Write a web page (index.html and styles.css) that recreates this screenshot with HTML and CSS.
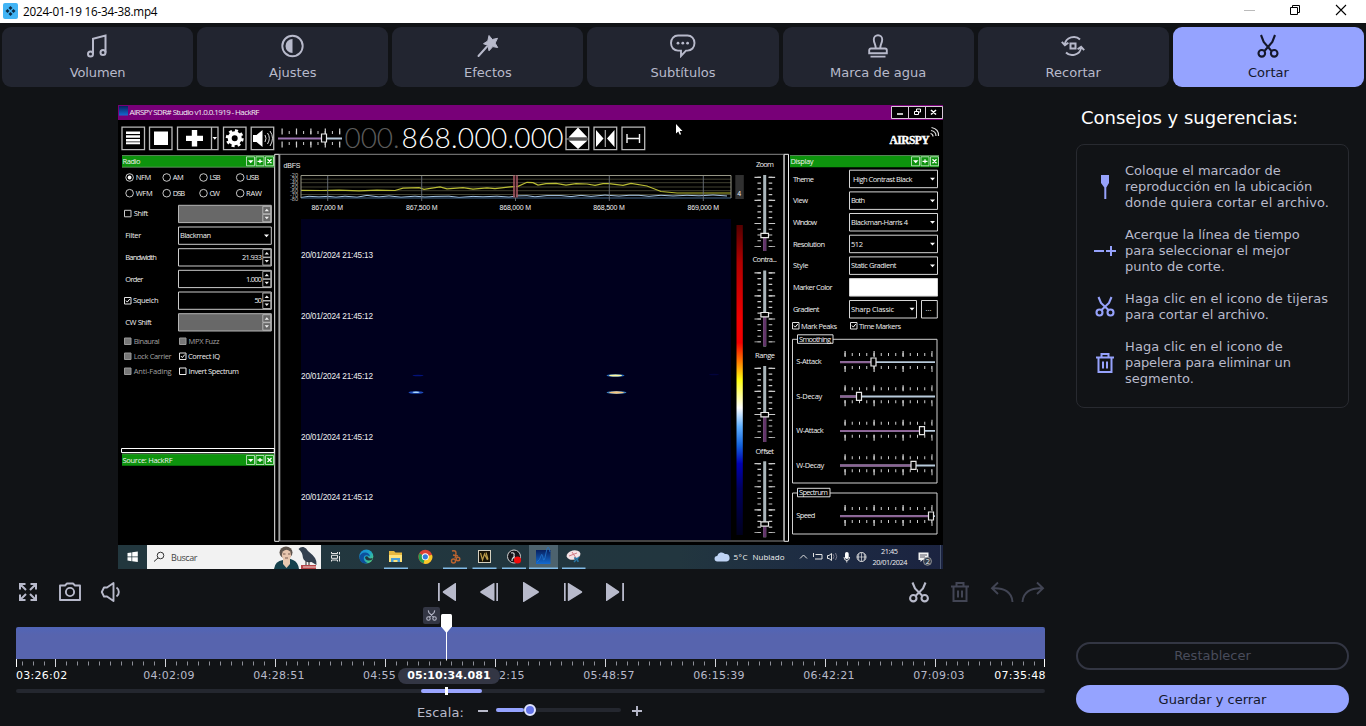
FILE: index.html
```html
<!DOCTYPE html>
<html lang="es">
<head>
<meta charset="utf-8">
<title>2024-01-19 16-34-38.mp4</title>
<link rel="stylesheet" href="styles.css">
</head>
<body>
<svg class="defs" width="0" height="0">
  <defs>
    <symbol id="i-cut" viewBox="0 0 24 24"><g fill="none" stroke="currentColor" stroke-width="2"><circle cx="6.4" cy="17.6" r="3.2"/><circle cx="17.6" cy="17.6" r="3.2"/><path d="M6 2.5l1.2 4L15.8 15M18 2.5l-1.2 4L8.2 15" stroke-linejoin="round"/></g></symbol>
    <symbol id="i-trash" viewBox="0 0 24 24"><g fill="none" stroke="currentColor" stroke-width="2"><path d="M3 6.5h18M8.500 6V3h7v3M5.500 7v14h13V7M10 10.500v7M14 10.500v7"/></g></symbol>
  </defs>
</svg>

<header class="titlebar">
  <svg class="app-icon" width="15" height="16" viewBox="0 0 15 16"><rect width="15" height="16" rx="2" fill="#42b4f5"/><g fill="#0b2b45"><path d="M7.5 3l2 2-2 2-2-2zM7.5 9l2 2-2 2-2-2zM4.5 6l2 2-2 2-2-2zM10.500 6l2 2-2 2-2-2z"/></g></svg>
  <span class="file-name">2024-01-19 16-34-38.mp4</span>
  <svg class="window-buttons" width="104" height="14" viewBox="0 0 104 14" fill="none" stroke="#000"><path d="M1 7.500h11" stroke="#bbb"/><path d="M47.500 4.500h7v7h-7zM49.500 4.500v-2h7v7h-2"/><path d="M93 2l10 10M103 2l-10 10" stroke-width="1.100"/></svg>
</header>

<nav class="tabs">
  <div class="tab"><svg viewBox="0 0 24 24" fill="none" stroke="currentColor" stroke-width="2"><circle cx="4.500" cy="20" r="2.500"/><circle cx="17" cy="18.500" r="2.500"/><path d="M7 20V4.800L19.500 1.500v17"/></svg><span class="snug">Volumen</span></div>
  <div class="tab"><svg viewBox="0 0 24 24"><circle cx="11.500" cy="12" r="10.200" fill="none" stroke="currentColor" stroke-width="1.900"/><path d="M11.500 5v14a7 7 0 010-14z" fill="currentColor"/></svg><span>Ajustes</span></div>
  <div class="tab"><svg viewBox="0 0 24 24"><path d="M13 1.500l3.300 4 5.200-1.200-2.400 4.800 2.600 4.400-4.900-.9-3.800 4.200-1-5.400-4.500-1.700 4.300-2.700z" fill="currentColor" stroke="currentColor" stroke-linejoin="round"/><path d="M2.500 22L11 12.500" stroke="currentColor" stroke-width="2" stroke-linecap="round"/></svg><span>Efectos</span></div>
  <div class="tab"><svg class="wide" viewBox="0 0 28 24"><path d="M9 1.500h9.500c4 0 7 3 7 7.500s-3 7.600-7 7.600H17L12 22v-5.400H9c-4 0-7-3.100-7-7.600s3-7.500 7-7.500z" fill="none" stroke="currentColor" stroke-width="1.900"/><g fill="currentColor"><circle cx="9" cy="9.200" r="1.400"/><circle cx="13.800" cy="9.200" r="1.400"/><circle cx="18.600" cy="9.200" r="1.400"/></g></svg><span>Subtítulos</span></div>
  <div class="tab"><svg viewBox="0 0 24 24" fill="none" stroke="currentColor" stroke-width="1.900"><path d="M9.800 14.500c0-4-2-5.500-2-9a4.200 4.200 0 018.400 0c0 3.500-2 5-2 9M5 14.500h14a1.800 1.800 0 011.800 1.800v2.900H3.200v-2.900A1.800 1.800 0 015 14.500zM4.500 22.600h15"/></svg><span>Marca de agua</span></div>
  <div class="tab"><svg viewBox="0 0 24 24" fill="none" stroke="currentColor" stroke-width="1.900"><path d="M19 5.500C14.500.8 4.500 3 4 10.500M.8 7.800l3.100 3.400 3.500-2.500M5 18.500c4.500 4.700 14.500 2.500 15-5M23.200 16.200l-3.100-3.400-3.500 2.500"/><path d="M9.500 9.500h5v5h-5z" stroke-width="2"/></svg><span>Recortar</span></div>
  <div class="tab active"><svg class="cut" viewBox="0 0 24 24" fill="none" stroke="currentColor" stroke-width="2.100"><circle cx="5.800" cy="19.300" r="3.300"/><circle cx="18.200" cy="19.300" r="3.300"/><path d="M5 1l2.700 7 7.800 9M19 1l-2.700 7-7.800 9"/></svg><span>Cortar</span></div>
</nav>

<main class="workspace">
  <section class="editor">
    <svg class="preview" viewBox="118 105 825 464" width="825" height="464">
      <defs>
        <linearGradient id="heat" x1="0" y1="0" x2="0" y2="1"><stop offset="0" stop-color="#500"/><stop offset=".12" stop-color="#b00000"/><stop offset=".3" stop-color="#e00"/><stop offset=".38" stop-color="#f20000"/><stop offset=".44" stop-color="#ff7a00"/><stop offset=".5" stop-color="#ffff10"/><stop offset=".59" stop-color="#fff"/><stop offset=".65" stop-color="#60b0ff"/><stop offset=".71" stop-color="#1464dc"/><stop offset=".77" stop-color="#0000b0"/><stop offset=".85" stop-color="#00005c"/><stop offset="1" stop-color="#00001c"/></linearGradient>
        <linearGradient id="task"><stop offset="0" stop-color="#22373e"/><stop offset=".68" stop-color="#22363f"/><stop offset=".85" stop-color="#1d2b43"/><stop offset="1" stop-color="#1b2340"/></linearGradient>
        <linearGradient id="edge" x1="0" y1="0" x2="1" y2="1"><stop offset="0" stop-color="#1684d8"/><stop offset=".5" stop-color="#1ca5c8"/><stop offset="1" stop-color="#63d764"/></linearGradient>
        <linearGradient id="wave" x1="0" y1="0" x2="0" y2="1"><stop offset="0" stop-color="#07205f"/><stop offset="1" stop-color="#146bd0"/></linearGradient>
        <clipPath id="plot"><path d="M301 175h430v24H301z"/></clipPath>
        <g id="head-buttons" fill="none" stroke="#d4ecd4"><path d="M.5.5h8v9h-8zM10 .5h8v9h-8zM19.500.5h8v9h-8z" stroke-width=".8"/><path d="M2 4h5.500L4.700 7z" fill="#fff" stroke="none"/><path d="M11.500 5h5M14 3v4M21.500 3l4 4M25.500 3l-4 4" stroke="#fff" stroke-width="1.300"/></g>
        <g id="arrow"><path d="M-2.500-1.200h5L0 1.500z" fill="#fff"/></g>
        <g id="spin"><path d="M0 0h8v7.500H0zM0 8h8v7.500H0z" fill="none" stroke="#bbb" stroke-width=".9"/><path d="M1.800 5h4.400L4 2.500zM1.800 10.500h4.400L4 13z" fill="#eee"/></g>
        <g id="ticks" stroke="#d0d0d0"><path d="M4.500-7.500h87.500" stroke-width="3" stroke-dasharray="1 6.250"/><path d="M4.500 5.500h87.500" stroke-width="3" stroke-dasharray="1 6.250"/><path d="M4.500-8h88" stroke-width="6" stroke-dasharray="1.200 27.800"/><path d="M4.500 7h88" stroke-width="6" stroke-dasharray="1.200 27.800"/><path d="M0 .2h95" stroke="#b7c9da" stroke-width="1.800"/></g>
        <g id="vticks" stroke="#c9c9c9"><path d="M-5.500 1.800v70" stroke-width="3.500" stroke-dasharray="1.200 4.560"/><path d="M5.800 1.800v70" stroke-width="3.500" stroke-dasharray="1.200 4.560"/><path d="M-7 1.800v70M7.200 1.800v70" stroke-width="6.500" stroke-dasharray="1.200 21.850"/><path d="M0 0v76" stroke="#a9b5ba" stroke-width="3"/></g>
        <g id="thumb"><path d="M-2.500-4h5v8h-5z" fill="#000" stroke="#e6e6e6" stroke-width="1.200"/></g>
        <g id="vthumb"><path d="M-3.800-2.200h7.600v4.400h-7.600z" fill="#000" stroke="#e6e6e6" stroke-width="1.200"/></g>
        <g id="checked"><path d="M.5.500h6.500v6.500H.5z" fill="#000" stroke="#e2e2e2"/><path d="M2 3.600l1.300 1.500L5.800 2" fill="none" stroke="#fff"/></g>
      </defs>
      <rect x="118" y="105" width="825" height="464" fill="#000"/>
      <rect x="118" y="105" width="825" height="15" fill="#780078"/>
      <rect x="119" y="106" width="9" height="9.500" fill="url(#wave)"/>
      <text class="f8" x="129.500" y="114.800" textLength="130">AIRSPY SDR# Studio v1.0.0.1919 - HackRF</text>
      <g fill="#000" stroke="#d8c8d8"><path d="M891.500 106.500h17v12h-17zM908.500 106.500h17v12h-17zM925.500 106.500h17v12h-17z"/></g>
      <g fill="none" stroke="#fff"><path d="M897 114h6M931 110l5 4.500M936 110l-5 4.500" stroke-width="1.600"/><path d="M914.500 111.500h4v3h-4zM916.500 111v-2h4v3h-2"/></g>

      <!-- Toolbar -->
      <g fill="none" stroke="#b9b9b9" stroke-width="1.300"><path d="M122 127.200h22.500v22.500H122zM149.500 127.200H172v22.500h-22.500zM177.500 127.200H218v22.500h-40.500zM211.500 127.200v22.500M223.500 127.200H246v22.500h-22.500zM251.200 127.200h22.500v22.500h-22.500zM566 127.200h22.700v22.500H566zM594 127.200h22.700v22.500H594zM622 127.200h22.700v22.500H622z"/></g>
      <g fill="#fff"><path d="M126 131.500h14v2.400h-14zM126 135.300h14v2.400h-14zM126 139.100h14v2.400h-14zM126 142.300h14v1.900h-14zM154 131.500h14v13.500h-14zM191.800 130h5.400v5.800h5.800v5.200h-5.800v5.500h-5.400V141H186v-5.200h5.800zM212.500 137h4.500l-2.200 2.700zM253 135h3.500l6-5v17l-6-5H253zM568.500 137.500l9.500-10 9.500 10zM568.500 140.500l9.500 8.500 9.500-8.500zM596 130l7.500 8.500-7.500 8.500zM614.500 130l-7.500 8.500 7.500 8.500z"/></g>
      <path d="M565.500 139h23.500M605.300 130v17" stroke="#aaa" stroke-width="1.200"/>
      <circle cx="234.700" cy="138.300" r="5" fill="none" stroke="#fff" stroke-width="4"/><circle cx="234.700" cy="138.300" r="7.600" fill="none" stroke="#fff" stroke-width="2.800" stroke-dasharray="3 2.970"/>
      <path d="M265 135q2 3.300 0 7M267.500 133q3.600 5 0 11M270 131q5 7 0 15" fill="none" stroke="#ddd"/><path d="M627 134v9M639.500 134v9M627 138.500h12.500" fill="none" stroke="#f2f2f2" stroke-width="1.400"/>
      <g stroke="#cfcfcf"><path d="M281.500 131.500h60M281.500 144.500h60" stroke-width="6" stroke-dasharray="1.200 13.200"/><path d="M288.700 132.500h53M288.700 143.500h53" stroke-width="3" stroke-dasharray="1 6.200"/></g>
      <path d="M278 138.500h46" stroke="#9a72b0" stroke-width="2"/><path d="M325 138.500h17" stroke="#b7c9da" stroke-width="2"/><use href="#thumb" x="324" y="138"/>
      <g class="freq"><text x="344.500" y="147.800" textLength="55">000.</text><text x="401.500" y="147.800" textLength="162">868.000.000</text></g>
      <path d="M676 124v9.500l2.300-2 1.500 3.300 1.300-.6-1.400-3.200h2.800z" fill="#fff"/>
      <text x="889.500" y="143.700" class="logo" textLength="40">AIRSPY</text>
      <path d="M930.500 133.500q2.500.5 2.500 3M931 130.500q5 .8 5 5.500M931.500 127.500q7.500 1.500 7 8.500" fill="none" stroke="#ddd" stroke-width="1.200"/>

      <!-- Splitters -->
      <g fill="none"><path d="M279 154.300h505M280 541h504" stroke="#888"/><path d="M274.700 154.300v387h4.500v-387z" stroke="#eee"/><path d="M279.500 154v387" stroke="#a0a0a0" stroke-width="1.600"/><path d="M784.200 154.300h4.300v387h-4.300z" stroke="#eee"/><path d="M783.800 155v386" stroke="#999" stroke-width="1.400"/><path d="M121.500 448.500h152.800v4H121.500z" stroke="#fff"/></g>

      <!-- Radio panel -->
      <path d="M122 155.500h152.200v11.700H122zM122 454h152.200v11.700H122zM790 155.500h149v11.700H790z" fill="#0d930d"/>
      <path d="M122 167.200h152M122 155.500h152M122 453.800h152M790 155.500h149" stroke="#7b9c7b" stroke-width=".7"/>
      <use href="#head-buttons" x="246" y="156.300"/><use href="#head-buttons" x="246" y="455"/><use href="#head-buttons" x="911" y="156.300"/>
      <g class="f7"><text x="122.500" y="163.800" textLength="18">Radio</text><text x="122.500" y="462.500" textLength="50">Source: HackRF</text><text x="790.500" y="163.800" textLength="23">Display</text></g>
      <g fill="none" stroke="#ddd" stroke-width=".9"><circle cx="129.600" cy="177.500" r="3.800"/><circle cx="166.700" cy="177.500" r="3.800"/><circle cx="203.500" cy="177.500" r="3.800"/><circle cx="240.200" cy="177.500" r="3.800"/><circle cx="129.600" cy="193.200" r="3.800"/><circle cx="166.700" cy="193.200" r="3.800"/><circle cx="203.500" cy="193.200" r="3.800"/><circle cx="240.200" cy="193.200" r="3.800"/></g><circle cx="129.600" cy="177.500" r="1.900" fill="#fff"/>
      <g class="f7"><text x="135.700" y="180.200" textLength="15.500">NFM</text><text x="172.700" y="180.200" textLength="11">AM</text><text x="209.500" y="180.200" textLength="11">LSB</text><text x="246" y="180.200" textLength="13">USB</text><text x="135.700" y="195.900" textLength="17">WFM</text><text x="172.700" y="195.900" textLength="12.500">DSB</text><text x="209.500" y="195.900" textLength="10.500">CW</text><text x="246" y="195.900" textLength="16">RAW</text>
      <text x="133.700" y="216.200" textLength="14.500">Shift</text><text x="125.300" y="238.200" textLength="16">Filter</text><text x="125.300" y="259.800" textLength="31.500">Bandwidth</text><text x="125.300" y="281.500" textLength="18">Order</text><text x="133" y="303.200" textLength="25.500">Squelch</text><text x="125.300" y="324.900" textLength="26.500">CW Shift</text></g>
      <g fill="#000" stroke="#ccc"><path d="M124.500 210.300h6.500v6.500h-6.500z"/><path d="M178.500 205.300h92.800v17.300h-92.800zM178.500 313.700h92.800V331h-92.800z" fill="#686868" stroke="#b5b5b5"/><path d="M178.500 227h92.800v17.300h-92.800zM178.500 248.700h92.800V266h-92.800zM178.500 270.300h92.800v17.300h-92.800zM178.500 292h92.800v17.300h-92.800z"/></g>
      <use href="#checked" x="124" y="297"/><use href="#arrow" x="266.500" y="235.700"/>
      <use href="#spin" x="262.800" y="206.300"/><use href="#spin" x="262.800" y="249.600"/><use href="#spin" x="262.800" y="271.300"/><use href="#spin" x="262.800" y="293"/><use href="#spin" x="262.800" y="314.700"/>
      <g class="f7"><text x="180" y="238.200" textLength="31">Blackman</text><text x="242" y="259.800" textLength="20">21.933</text><text x="246" y="281.500" textLength="16">1.000</text><text x="254.500" y="303.200" textLength="7.500">50</text></g>
      <g fill="#777" stroke="#999"><path d="M124.500 338h6.500v6.500h-6.500zM179.500 338h6.500v6.500h-6.500zM124.500 353h6.500v6.500h-6.500zM124.500 368h6.500v6.500h-6.500z"/><path d="M179.500 368h6.500v6.500h-6.500z" fill="#000" stroke="#eee"/></g><use href="#checked" x="179" y="352.500"/>
      <g class="f7"><g class="dim"><text x="133.700" y="343.700" textLength="26">Binaural</text><text x="188.500" y="343.700" textLength="31">MPX Fuzz</text><text x="133.700" y="358.800" textLength="38">Lock Carrier</text><text x="133.700" y="373.800" textLength="38">Anti-Fading</text></g><text x="188" y="358.800" textLength="32">Correct IQ</text><text x="188.500" y="373.800" textLength="50.500">Invert Spectrum</text></g>

      <!-- Spectrum -->
      <text class="a7" x="283.500" y="168" textLength="17">dBFS</text>
      <g class="axis"><text x="290" y="176.500">-20</text><text x="290" y="180.500">-30</text><text x="290" y="184.500">-40</text><text x="290" y="188.500">-50</text><text x="290" y="192.500">-60</text><text x="290" y="196.500">-70</text><text x="290" y="200.500">-80</text></g>
      <g clip-path="url(#plot)">
        <path d="M301 179.200h430M301 182.700h430M301 187h430M301 190.700h430M301 194.500h430" stroke="#50503c" stroke-width=".8"/>
        <path d="M301 197.500l8-1.200 10 .6 9-.6 8 .9 9-1 12 1 10-1.800 12 1.500 10-1 12 1.300 14-1 10 .8 10-.6 14-.2 10 1.200 14-1 10 .4 14-.6 12 .9 8-1.200 10-.2 8 1.100 12-1.200h14l10 1 10-1.200 10 1 14-1.300 14 1 10-.8h10l10 1 12-1 12 .7 14-.7 12 .5 14-.8 14 1" fill="none" stroke="#a8c8e8"/>
        <path d="M301 198h430" stroke="#42678b" stroke-width="1.200"/>
        <path d="M301 190.300l20 .2 18-.3 20 .7 18-.7 18 .3 8-2.300 16-.5 5 1.600 16-2.500 7 2 16-1.200 10 1.500 14-1.300 8 .8 15-1.800 8-.5 9-4 6 .3 5 2.500 8-1.500 10-.3 10 1.800 10-1.500 11 .4 8 1.300 8-1.700h6l14 1.800 8-2 16 2.600 14 5.500 16 1.500h75" fill="none" stroke="#b9bc34" stroke-width="1.200"/>
      </g>
      <path d="M327.700 176v25M421.700 176v25M515.500 176v25M609.300 176v25M703.300 176v25" stroke="#6a727a" stroke-width=".9"/>
      <path d="M301 198v-22.500h430v22.500" fill="none" stroke="#969686"/>
      <rect x="513" y="175.500" width="5" height="22" fill="#a35460" opacity=".8"/><path d="M515.500 175.500v22" stroke="#2b1216"/>
      <g class="a7"><text x="311.500" y="210" textLength="31.500">867,000 M</text><text x="406" y="210" textLength="31.500">867,500 M</text><text x="499.500" y="210" textLength="31.500">868,000 M</text><text x="593.300" y="210" textLength="31.500">868,500 M</text><text x="687.500" y="210" textLength="31.500">869,000 M</text></g>
      <rect x="735.300" y="175" width="8.500" height="24" fill="#303030"/><text class="a7" x="737.300" y="195.500">4</text>
      <rect x="301" y="219" width="430" height="321" fill="#00001e"/>
      <g><ellipse cx="615.500" cy="375.500" rx="9" ry="1.300" fill="#246ac0"/><ellipse cx="615.500" cy="375.500" rx="6.500" ry="1.100" fill="#fff9a0"/><ellipse cx="616.500" cy="392.500" rx="10" ry="1.500" fill="#3c80c0"/><ellipse cx="616.500" cy="392.500" rx="7.500" ry="1.200" fill="#f7c580"/><ellipse cx="416" cy="392.500" rx="7.500" ry="1.300" fill="#1d49b9"/><ellipse cx="416" cy="392.300" rx="3.500" ry=".8" fill="#a9d9ff"/><ellipse cx="418" cy="375.500" rx="5.500" ry=".8" fill="#03127a"/><ellipse cx="714" cy="374.500" rx="5" ry=".8" fill="#02033c"/></g>
      <g class="a8"><text x="301" y="258.400" textLength="72">20/01/2024 21:45:13</text><text x="301" y="318.900" textLength="72">20/01/2024 21:45:12</text><text x="301" y="379.400" textLength="72">20/01/2024 21:45:12</text><text x="301" y="439.700" textLength="72">20/01/2024 21:45:12</text><text x="301" y="500.200" textLength="72">20/01/2024 21:45:12</text></g>
      <rect x="736.500" y="225" width="6.300" height="310" fill="url(#heat)"/>
      <g class="f7"><text x="756" y="167" textLength="18">Zoom</text><text x="752.500" y="262.200" textLength="24.500">Contra...</text><text x="755" y="358.200" textLength="20">Range</text><text x="755.500" y="453.800" textLength="18.500">Offset</text></g>
      <use href="#vticks" x="764.700" y="175"/><use href="#vticks" x="764.700" y="270.500"/><use href="#vticks" x="764.700" y="366"/><use href="#vticks" x="764.700" y="461.300"/>
      <path d="M764.700 236v15M764.700 315v31M764.700 415v27M764.700 524v13" stroke="#63346a" stroke-width="3"/><use href="#vthumb" x="764.700" y="235.500"/><use href="#vthumb" x="764.700" y="314.700"/><use href="#vthumb" x="764.700" y="414.700"/><use href="#vthumb" x="764.700" y="524"/>

      <!-- Display panel -->
      <g fill="none" stroke="#d6d6d6"><path d="M849.500 170.200h88v17.500h-88zM849.500 191.900h88v17.500h-88zM849.500 213.500h88V231h-88zM849.500 235.200h88v17.500h-88zM849.500 256.900h88v17.500h-88zM849.500 300.500h67v17.500h-67zM921.500 300.500h15.800v17.500h-15.800z"/><path d="M849.500 278.600h88v17.500h-88z" fill="#fff"/></g>
      <use href="#arrow" x="932.500" y="179"/><use href="#arrow" x="932.500" y="200.700"/><use href="#arrow" x="932.500" y="222.300"/><use href="#arrow" x="932.500" y="244"/><use href="#arrow" x="932.500" y="265.700"/><use href="#arrow" x="912" y="309"/>
      <g class="f7"><text x="793" y="181.500" textLength="21">Theme</text><text x="793" y="203.100" textLength="15">View</text><text x="793" y="224.900" textLength="24">Window</text><text x="793" y="246.500" textLength="32">Resolution</text><text x="793" y="268.200" textLength="15.500">Style</text><text x="793" y="289.900" textLength="39.500">Marker Color</text><text x="793" y="311.500" textLength="26.500">Gradient</text>
      <text x="853" y="181.500" textLength="59.500">High Contrast Black</text><text x="851" y="203.100" textLength="14">Both</text><text x="851" y="224.900" textLength="57">Blackman-Harris 4</text><text x="851" y="246.500" textLength="12">512</text><text x="851" y="268.200" textLength="45.500">Static Gradient</text><text x="851" y="311.500" textLength="43">Sharp Classic</text><text x="925.500" y="311">...</text><text x="801" y="328.700" textLength="36">Mark Peaks</text><text x="859" y="328.700" textLength="42">Time Markers</text></g>
      <use href="#checked" x="792" y="322"/><use href="#checked" x="850" y="322"/>
      <path d="M792.500 339.300h144.500V483H792.500zM792.500 493h144.500v41H792.500z" fill="none" stroke="#d0d0d0"/><path d="M797.500 334.800h35.500v8.500h-35.500zM797.500 488.300h32.500v8.500h-32.500z" fill="#000" stroke="#ddd"/>
      <g class="f7"><text x="799" y="341.800" textLength="32">Smoothing</text><text x="799" y="495.300" textLength="29">Spectrum</text><text x="796.300" y="364" textLength="25.500">S-Attack</text><text x="796.300" y="398.700" textLength="26">S-Decay</text><text x="796.300" y="433" textLength="27.500">W-Attack</text><text x="796.300" y="467.500" textLength="28">W-Decay</text><text x="796.300" y="518.300" textLength="19">Speed</text></g>
      <use href="#ticks" x="840" y="362"/><use href="#ticks" x="840" y="396.300"/><use href="#ticks" x="840" y="430.700"/><use href="#ticks" x="840" y="465.300"/><use href="#ticks" x="840" y="516"/>
      <path d="M840 362.200h33M840 396.500h19M840 430.900h82M840 465.500h73M840 516.200h91" stroke="#8d6196" stroke-width="1.900"/>
      <use href="#thumb" x="873.500" y="362"/><use href="#thumb" x="859" y="396.300"/><use href="#thumb" x="922" y="430.700"/><use href="#thumb" x="913.500" y="465.300"/><use href="#thumb" x="931" y="516"/>

      <!-- Windows taskbar -->
      <rect x="118" y="545" width="825" height="24" fill="url(#task)"/>
      <path d="M127.500 553l4-.6v4.200h-4zM132.200 552.300l5.600-.8v5.100h-5.600zM127.500 557.200h4v4l-4-.6zM132.200 557.200h5.600v4.900l-5.600-.8z" fill="#fff"/>
      <rect x="147" y="545" width="174" height="24" fill="#f2f2f2"/><circle cx="160.500" cy="555.500" r="3.300" fill="none" stroke="#333"/><path d="M158 558l-4 3.500" stroke="#333"/><text class="search" x="171" y="560.700" textLength="26.500">Buscar</text>
      <path d="M274 569q1-8 9-9l5-2 5 2q5 2 6 9z" fill="#16414c"/><path d="M283 558h7v6l-3.500 4-3.500-4z" fill="#e7c9b0"/><ellipse cx="286" cy="552.500" rx="6.500" ry="6" fill="#5d534c"/><ellipse cx="286.500" cy="555" rx="4.600" ry="5.300" fill="#e9c6ae"/><path d="M283 554h2.500M288 554h2.500M285 558h3" stroke="#5a3f35" stroke-width=".8"/>
      <path d="M298.500 549q2-2.500 5-2 3 1 4.500 4 5 4 7 7 2 3 1.500 7l-5-3q-7 1-8.500-4-.5-6-4.500-9z" fill="#33404f"/><path d="M306 561v4M309 561v4" stroke="#222"/><path d="M301 565h15v4h-15z" fill="#b54549"/><path d="M303 567h13" stroke="#f0d4d0"/>
      <g fill="none" stroke="#e6e6e6"><path d="M331.500 552v1.500h6V552M331.500 561.500V560h6v1.500M331.500 555.300h6v3h-6zM339.500 552v2.500M339.500 556v5.500"/></g>
      <circle cx="366.300" cy="556.500" r="7" fill="url(#edge)"/><path d="M359.400 557q1.500-5 6.500-4.500 4 .8 4 4-5-2.500-6 .5-1 4 4 6.200-8 1.500-8.500-6.200z" fill="#0d4f9c"/><path d="M365 557.500q1-2 3-.8.500 2.500 4.800 1.300-.8 2.500-3.800 2.500-3.500-.2-4-3z" fill="#22373e"/>
      <path d="M389 551h5l1.500 1.500h6.500V562h-13z" fill="#e6b840"/><path d="M389 555h13v7h-13z" fill="#ffe37b"/><path d="M391 558h9v4h-9z" fill="#4a9ed6"/><path d="M393.500 560h4v2h-4z" fill="#fce27b"/>
      <circle cx="425.300" cy="556.800" r="7" fill="#dc4436"/><path d="M425.300 556.800l-6-3.500a7 7 0 004.500 10.300z" fill="#269f51"/><path d="M425.300 556.800l6.800-2a7 7 0 01-8.500 8.800z" fill="#f7c928"/><circle cx="425.300" cy="556.800" r="3.500" fill="#fff"/><circle cx="425.300" cy="556.800" r="2.600" fill="#327ddb"/>
      <g fill="none" stroke="#bd6430" stroke-width="1.400"><path d="M452 551q4-1 4 2t-1 5M453 555l5 1"/><circle cx="453.500" cy="561" r="2"/><circle cx="458" cy="559" r="1.800"/></g>
      <rect x="478.500" y="550.500" width="12" height="12" fill="#171307" stroke="#d5d0c0"/><path d="M480.500 553l2 7 2-6 3 6M486 552.500l2 7" fill="none" stroke="#bb9c49" stroke-width="1.200"/>
      <circle cx="514" cy="556.500" r="6.500" fill="#15151a" stroke="#cdcdcd"/><path d="M511 553q4-1 3 3t4 3M512 561q0-4 3-4" stroke="#ddd" stroke-width="1.100" fill="none"/><circle cx="517.500" cy="560" r="3.600" fill="#f20c0c"/>
      <rect x="529" y="545" width="29" height="24" fill="#4d636e"/><rect x="536" y="550" width="14.500" height="14" fill="url(#wave)"/><path d="M537 562q3-2 4-6t2 2 3-5 4-1" fill="none" stroke="#2277cf" stroke-width=".8"/>
      <ellipse cx="573.500" cy="555" rx="7" ry="4.500" transform="rotate(-12 573.500 555)" fill="#f4e3e6"/><path d="M569 556l8-3M572 552l4 6" stroke="#d27983"/><path d="M574 558q4 0 4 4M579 557l-5 5" stroke="#2976a4" stroke-width="1.500" fill="none"/>
      <path d="M384 568.200h24M443 568.200h24M472.500 568.200h24M502 568.200h24M529 568.200h29M562 568.200h23.500" stroke="#82bce8" stroke-width="1.500"/>
      <path d="M717.500 561.500a2.800 2.800 0 01-.3-5.600 4.500 4.500 0 017.800-1.900 3.800 3.800 0 011.500 7.500z" fill="#bfd4f5"/>
      <g class="sys"><text x="733.500" y="560" textLength="14">5°C</text><text x="752.500" y="560" textLength="32">Nublado</text></g>
      <g fill="none" stroke="#e2e2e2"><path d="M800 558.500l3.500-3.500 3.500 3.500M815.500 554.500h6.500v4.500h-7M813.500 553v4M827.500 555.500h1.500l2.500-2v7l-2.500-2h-1.500z"/><path d="M833 554q2 2.500 0 5M835.500 553q2.500 4 0 7" stroke="#778"/><circle cx="861.500" cy="557" r="4.500"/><path d="M857 557h9M861.500 552.500v9M859 553.500q-1.500 3.500 0 7M864 553.500q1.500 3.500 0 7" stroke-width=".7"/><path d="M844 557q0 3.500 2.800 3.500t2.800-3.500M846.800 560v2.500"/></g><rect x="845" y="552" width="3.700" height="7" rx="1.800" fill="#fff"/>
      <g class="sys small"><text x="881" y="553.800" textLength="17">21:45</text><text x="872.500" y="564.500" textLength="35">20/01/2024</text></g>
      <path d="M918.500 552.500h10v7.500h-6l-2 2v-2h-2z" fill="#f2f2f2"/><path d="M920 555h7M920 557h5" stroke="#334" stroke-width=".8"/><circle cx="927.500" cy="561.300" r="4" fill="#333c4b" stroke="#aaa" stroke-width=".8"/><text class="sys small" x="925.700" y="563.800">2</text><path d="M940.500 545v24" stroke="#54617a" stroke-width=".8"/>
    </svg>

    <div class="controls">
      <div class="group left">
        <svg viewBox="0 0 24 24" fill="none" stroke="currentColor" stroke-width="2"><path d="M4 9.500V4h5.500M4.500 4.500L10 10M14.500 4H20v5.500M19.500 4.500L14 10M4 14.500V20h5.500M4.500 19.500L10 14M20 14.500V20h-5.500M19.500 19.500L14 14"/></svg>
        <svg viewBox="0 0 24 24" fill="none" stroke="currentColor" stroke-width="1.900"><path d="M2 5.500h5l2-2h6l2 2h5V20H2z" stroke-linejoin="round"/><circle cx="12" cy="12" r="4.100"/></svg>
        <svg class="speaker" viewBox="0 0 24 24" fill="none" stroke="currentColor" stroke-width="1.900"><path d="M14.500 3v18l-6.500-4.500H5L2.800 12 5 7.500h3zM17.500 7.500a5.500 5.500 0 010 9" stroke-linejoin="round"/></svg>
      </div>
      <div class="group center">
        <svg viewBox="0 0 24 24" fill="currentColor"><path d="M3 3h1.800v18H3zM21 3.500v17a.5.5 0 01-.8.400L8 12.700a1 1 0 010-1.400l12.200-8.200a.5.5 0 01.8.400z"/></svg>
        <svg viewBox="0 0 24 24" fill="currentColor"><path d="M19.300 3H21v18h-1.700zM17.500 3.500v17a.5.5 0 01-.8.400L3.500 12.700a1 1 0 010-1.400L16.700 3.100a.5.5 0 01.8.400z"/></svg>
        <svg viewBox="0 0 24 24" fill="currentColor"><path d="M4 2.500v19a.5.5 0 00.8.400L19.600 12.700a.9.900 0 000-1.400L4.800 2.100a.5.5 0 00-.8.400z"/></svg>
        <svg viewBox="0 0 24 24" fill="currentColor"><path d="M3 3h1.700v18H3zM6.800 3.500v17a.5.5 0 00.8.400l13.300-8.200a.9.900 0 000-1.400L7.600 3.100a.5.5 0 00-.8.400z"/></svg>
        <svg viewBox="0 0 24 24" fill="currentColor"><path d="M19.200 3H21v18h-1.800zM3 3.500v17a.5.5 0 00.8.400L16 12.700a1 1 0 000-1.400L3.800 3.100a.5.500 0 00-.8.400z"/></svg>
      </div>
      <div class="group right">
        <svg viewBox="0 0 24 24" fill="none" stroke="currentColor" stroke-width="2.100"><circle cx="6.300" cy="18.200" r="3.200"/><circle cx="17.700" cy="18.200" r="3.200"/><path d="M5.500 2.500l2.500 6 7.500 7.500M18.500 2.500l-2.500 6L8.500 16"/></svg>
        <svg class="off trash"><use href="#i-trash"/></svg>
        <svg class="off undo" viewBox="0 0 24 24" fill="none" stroke="currentColor" stroke-width="1.900"><path d="M8 2.500L2 8.300l6 5.700M2.500 8.300C14 7.500 22 12 22.500 22"/></svg>
        <svg class="off redo" viewBox="0 0 24 24" fill="none" stroke="currentColor" stroke-width="1.900"><path d="M16 2.500l6 5.800-6 5.700M21.500 8.300C10 7.500 2 12 1.500 22"/></svg>
      </div>
    </div>

    <div class="timeline">
      <div class="clip"></div>
      <svg class="ruler" width="1030" height="9" viewBox="0 0 1030 9"><path d="M6 4.500h1023" stroke="#8d8f98" stroke-width="4" stroke-dasharray="1 10"/><path d="M39 4h900" stroke="#d4d5dc" stroke-width="8" stroke-dasharray="1 109"/><path d="M.5 0v8M1028.500 0v8" stroke="#fff"/></svg>
      <div class="labels"><span class="edge first">03:26:02</span><span>04:02:09</span><span>04:28:51</span><span class="behind">04:55</span><span class="behind after">2:15</span><span>05:48:57</span><span>06:15:39</span><span>06:42:21</span><span>07:09:03</span><span class="edge">07:35:48</span></div>
      <div class="overview"><div class="range"><i></i></div></div>
      <div class="cut-flag"><svg><use href="#i-cut"/></svg></div>
      <svg class="playhead" width="12" height="47" viewBox="0 0 12 47"><path d="M0 1.500Q0 0 1.500 0h8Q11 0 11 1.500v11L5.500 19 0 12.500z" fill="#fff"/><path d="M5.500 17v29.500" stroke="#fff"/></svg>
      <div class="time-badge">05:10:34.081</div>
    </div>

    <div class="scale">
      <span class="scale-label">Escala:</span>
      <svg width="10" height="12" viewBox="0 0 10 12"><path d="M0 7h10" stroke="currentColor" stroke-width="2"/></svg>
      <div class="slider"><div class="filled"></div><div class="knob"></div></div>
      <svg width="10" height="12" viewBox="0 0 10 12"><path d="M0 7h10M5 2v10" stroke="currentColor" stroke-width="1.900"/></svg>
    </div>
  </section>

  <aside class="side">
    <h1>Consejos y sugerencias:</h1>
    <div class="tips">
      <div class="tip"><svg viewBox="0 0 24 24"><path d="M8 0h8v8l-2.700 4.500v11.500h-2V12.500L8 8z" fill="currentColor"/></svg><p>Coloque el marcador de<br>reproducción en la ubicación<br><span class="loose">donde quiera cortar el archivo.</span></p></div>
      <div class="tip"><svg viewBox="0 0 24 24"><path d="M1 12h10M13 12h10M18 7v10" stroke="currentColor" stroke-width="2"/></svg><p>Acerque la línea de tiempo<br>para seleccionar el mejor<br>punto de corte.</p></div>
      <div class="tip"><svg viewBox="0 0 24 24" fill="none" stroke="currentColor" stroke-width="2.100"><circle cx="6.500" cy="17.500" r="3"/><circle cx="17.500" cy="17.500" r="3"/><path d="M5.500 2L8 8l7.500 7M18.500 2L16 8l-7.500 7"/></svg><p><span class="loose">Haga clic en el icono de tijeras</span><br>para cortar el archivo.</p></div>
      <div class="tip"><svg><use href="#i-trash"/></svg><p><span class="loose">Haga clic en el icono de</span><br><span class="snug">papelera para eliminar un</span><br>segmento.</p></div>
    </div>
    <div class="actions">
      <button class="reset">Restablecer</button>
      <button class="save">Guardar y cerrar</button>
    </div>
  </aside>
</main>
</body>
</html>
```
FILE: styles.css
```css
* { box-sizing: border-box; }
body {
  margin: 0;
  width: 1366px;
  height: 726px;
  overflow: hidden;
  background: #111316;
  color: #b8bacb;
  font: 13px/16px "DejaVu Sans", Verdana, sans-serif;
}
svg { display: block; }
.defs { position: absolute; }
.loose { letter-spacing: .11px; }
.snug { letter-spacing: -.12px; }

.titlebar {
  display: flex;
  align-items: center;
  height: 23px;
  padding: 0 19px 0 3px;
  background: #fff;
  color: #000;
}
.app-icon { margin: -1px 5px 0 0; }
.file-name { margin-top: -2px; font: 11.7px/16px "Open Sans", "Noto Sans", sans-serif; letter-spacing: -.22px; }
.window-buttons { margin-left: auto; margin-top: -3px; }

.tabs {
  display: grid;
  grid-template-columns: repeat(7, 1fr);
  gap: 4px;
  padding: 4px 2px 0;
}
.tab {
  display: flex;
  flex-direction: column;
  align-items: center;
  height: 60px;
  padding-top: 7px;
  border-radius: 9px;
  background: #222530;
}
.tab svg { width: 24px; height: 24px; margin-bottom: 7px; }
.tab svg.wide { width: 28px; }
.tab.active { background: #95a3ff; color: #14172a; }

.workspace { display: flex; height: 639px; }
.editor { width: 1060px; }
.preview { margin: 18px 0 0 118px; }
.preview text { fill: #f0f0f0; }
.preview .f7 { font: 7.500px "Open Sans", "Noto Sans", sans-serif; }
.preview .f8 { font: 8px "Open Sans", "Noto Sans", sans-serif; }
.preview .a7 { font: 7px "Liberation Sans", sans-serif; }
.preview .a8 { font: 8.200px "Liberation Sans", sans-serif; }
.preview .axis { font: 5.600px/1 "Liberation Sans", sans-serif; }
.preview .axis text { fill: #bbb; }
.preview .dim text { fill: #a0a0a0; }
.preview .freq { font: 300 28px Lato, sans-serif; }
.preview .freq text:first-child { fill: #5c5c5c; }
.preview .freq text:last-child { fill: #fff; }
.preview .logo { font: bold 11.500px "Liberation Serif", serif; fill: #fff; stroke: #fff; stroke-width: .4; }
.preview .search { font: 9px "Open Sans", sans-serif; fill: #444; }
.preview .sys { font: 8px "Open Sans", sans-serif; }
.preview .small { font-size: 7.300px; }

.controls {
  display: grid;
  grid-template-columns: 419px 1fr auto;
  align-items: center;
  height: 46px;
  margin: 0 15px 0 16px;
}
.group { display: flex; gap: 18px; }
.group svg { width: 24px; height: 24px; }
.group .speaker { margin-left: -1px; }
.group.right { gap: 17px; }
.group .off { color: #424554; }
.group .undo { margin-left: 1px; }
.group .redo { margin-left: -10px; }

.timeline {
  position: relative;
  width: 1030px;
  height: 80px;
  margin-left: 16px;
  padding-top: 12px;
}
.clip {
  width: 1029px;
  height: 32px;
  border-radius: 2px 2px 0 0;
  background: linear-gradient(#5165b7, #5764ae 25%);
}
.labels {
  display: grid;
  grid-template-columns: 98px repeat(8, 110px) 52px;
  height: 21px;
  padding-top: 1px;
  font-size: 11px;
  line-height: 14px;
  letter-spacing: .25px;
  text-align: center;
}
.labels .edge { color: #fff; white-space: nowrap; }
.labels .first { text-align: left; }
.labels .behind { padding-left: 29px; text-align: left; }
.labels .after { padding-left: 55px; }
.overview { width: 1029px; height: 4px; border-radius: 2px; background: #24272f; }
.range { width: 61px; height: 4px; margin-left: 405px; border-radius: 2px; background: #9aa5ff; }
.range i { position: absolute; left: 429px; top: 72px; width: 3px; height: 8px; background: #fff; }
.cut-flag {
  position: absolute;
  left: 407px;
  top: -8px;
  width: 17px;
  height: 17px;
  padding: 2px;
  border-radius: 2px;
  background: #333644;
}
.cut-flag svg { width: 13px; height: 13px; }
.playhead { position: absolute; left: 425px; top: -1px; }
.time-badge {
  position: absolute;
  left: 382px;
  top: 53px;
  width: 102px;
  height: 16px;
  border-radius: 8px;
  background: #333644;
  color: #fff;
  font-size: 11px;
  font-weight: bold;
  letter-spacing: .15px;
  text-align: center;
}

.scale { display: flex; align-items: center; height: 30px; margin-left: 416px; }
.scale-label { width: 62px; padding: 5px 0 0 1px; letter-spacing: .15px; }
.slider { display: flex; align-items: center; width: 125px; height: 4px; margin: 0 11px 0 8px; border-radius: 2px; background: #24272f; }
.filled { width: 28px; height: 4px; border-radius: 2px; background: #95a3ff; }
.knob { width: 12px; height: 12px; border: 2px solid #dfe3ff; border-radius: 50%; background: #6474e8; }

.side { display: flex; flex-direction: column; width: 273px; margin-left: 16px; padding: 19px 0 13px; }
h1 { margin: 0 0 15px 5px; color: #fff; font-size: 18px; font-weight: normal; line-height: 23px; white-space: nowrap; }
.tips { display: flex; flex-direction: column; gap: 16px; height: 264px; padding: 18px 0 0 16px; border: 1px solid #282a30; border-radius: 8px; }
.tip { display: flex; align-items: center; gap: 8px; }
.tip svg { flex: none; width: 24px; height: 24px; color: #96a2fb; }
.tip p { margin: 0; white-space: nowrap; }
.actions { display: flex; flex-direction: column; gap: 15px; margin-top: auto; }
.actions button { height: 28px; padding: 0; border: 0; border-radius: 14px; font: inherit; }
.actions .reset { border: 2px solid #333643; background: none; color: #494c5b; }
.actions .save { padding-top: 1px; background: #95a3ff; color: #14172a; }
```
